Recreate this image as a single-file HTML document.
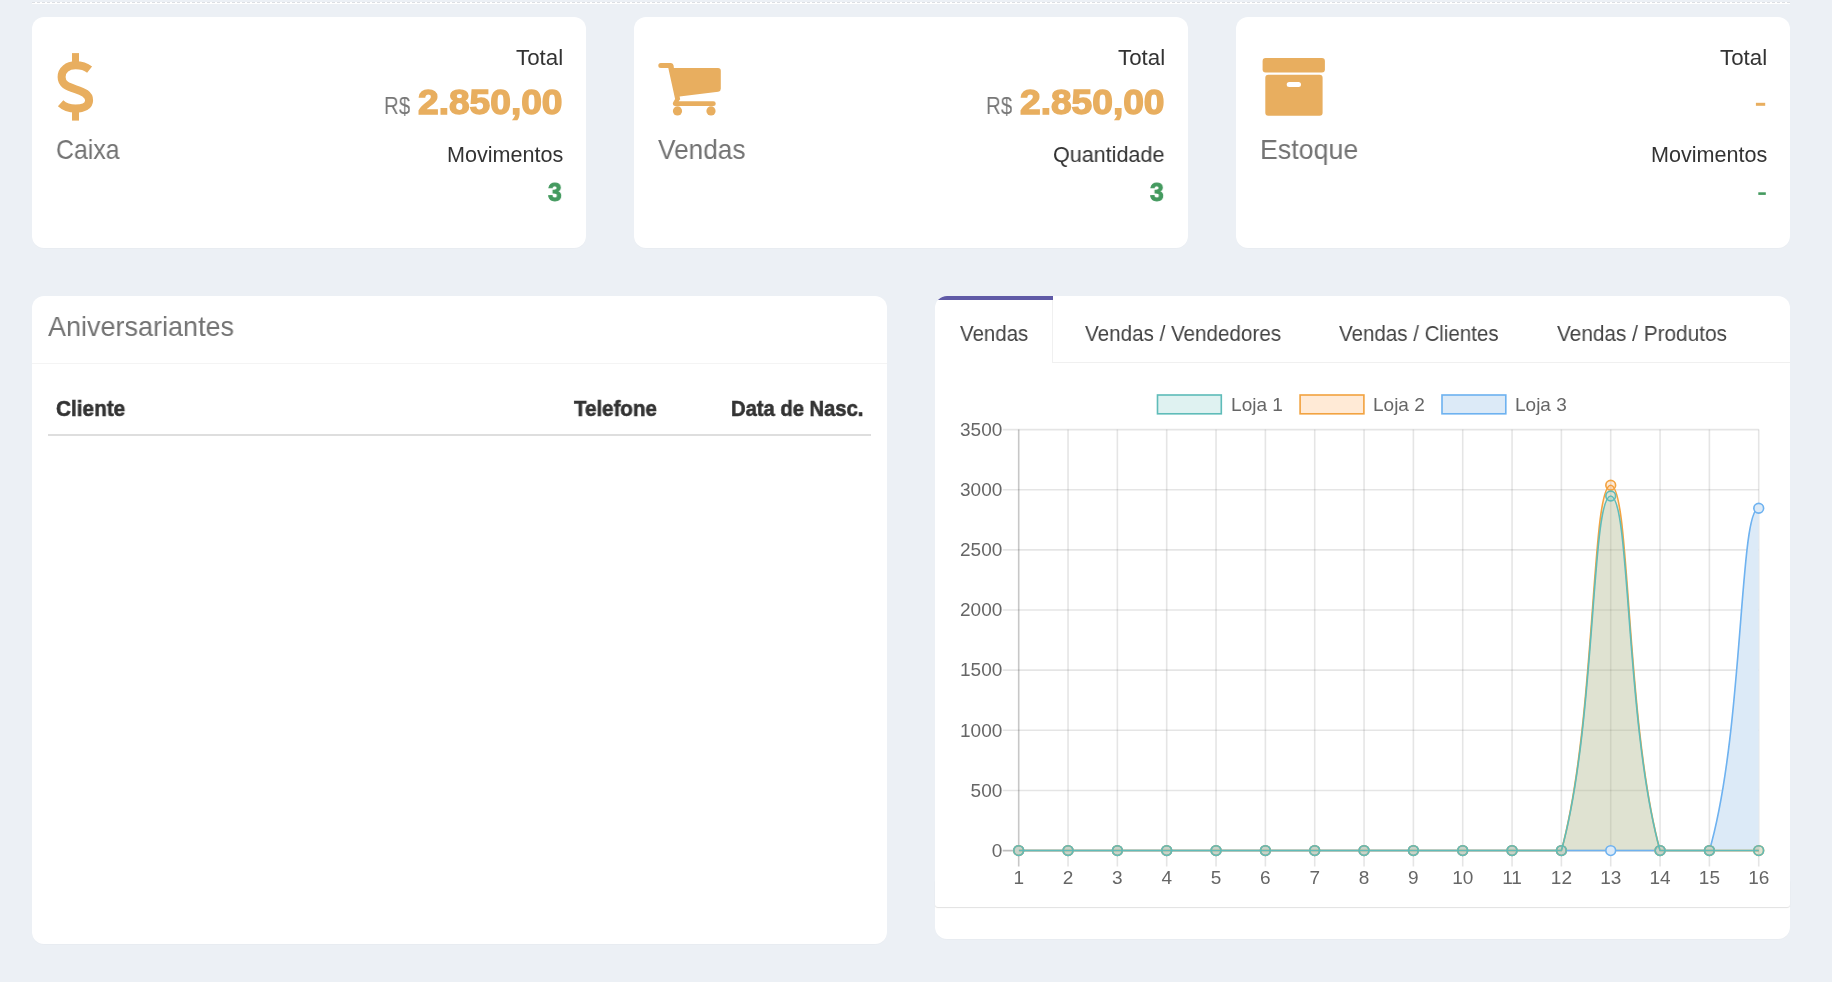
<!DOCTYPE html>
<html lang="pt-BR"><head><meta charset="utf-8"><title>Dashboard</title>
<style>
html,body{margin:0;padding:0}
body{width:1832px;height:982px;overflow:hidden;position:relative;background:#ecf0f5;font-family:"Liberation Sans",sans-serif}
.t{position:absolute;white-space:nowrap;transform-origin:0 0;will-change:transform}
.box{position:absolute;background:#fff;border-radius:12px;box-shadow:0 1px 0 rgba(0,0,0,0.015)}
.ln{position:absolute}
svg{position:absolute;left:0;top:0;will-change:transform}
.tk{font-family:"Liberation Sans",sans-serif;font-size:19px;fill:#666}
</style></head><body>
<div class="ln" style="left:32px;top:2px;width:1758px;height:1px;background:repeating-linear-gradient(90deg,#dcdfe4 0 3px,#fff 3px 5px)"></div>
<div class="ln" style="left:32px;top:3px;width:1758px;height:1px;background:#fff"></div>
<div class="box" style="left:32px;top:17px;width:554px;height:231px"></div>
<div class="box" style="left:634px;top:17px;width:554px;height:231px"></div>
<div class="box" style="left:1236px;top:17px;width:554px;height:231px"></div>
<div class="box" style="left:32px;top:296px;width:855px;height:648px"></div>
<div class="ln" style="left:32px;top:363px;width:855px;height:1px;background:#f4f4f4"></div>
<div class="ln" style="left:48px;top:434px;width:823px;height:2px;background:#dedede"></div>
<div class="box" style="left:935px;top:296px;width:855px;height:643px"></div>
<div class="ln" style="left:935px;top:296px;width:118px;height:14px;background:linear-gradient(#5f5aa6 0,#5f5aa6 4px,transparent 4px);border-top-left-radius:12px"></div>
<div class="ln" style="left:1052px;top:300px;width:1px;height:62px;background:#f0f0f0"></div>
<div class="ln" style="left:1052px;top:362px;width:738px;height:1px;background:#f0f0f0"></div>
<div class="ln" style="left:935px;top:880px;width:855px;height:27px;background:#fff;border-radius:0 0 3px 3px;box-shadow:0 1px 1px rgba(0,0,0,0.12)"></div>
<div class="t" style="left:515.65px;top:48.00px;font-size:21.52px;line-height:21.52px;font-weight:400;color:#333333;transform:scaleX(1.0369)">Total</div><div class="t" style="left:383.96px;top:94.00px;font-size:24.78px;line-height:24.78px;font-weight:400;color:#777777;transform:scaleX(0.8258)">R$</div><div class="t" style="left:417.59px;top:84.00px;font-size:35.07px;line-height:35.07px;font-weight:700;color:#e8ae5f;transform:scaleX(1.0588);-webkit-text-stroke:1.4px #e8ae5f">2.850,00</div><div class="t" style="left:547.51px;top:179.00px;font-size:26.29px;line-height:26.29px;font-weight:700;color:#449a5f;transform:scaleX(0.9359);-webkit-text-stroke:1.0px #449a5f">3</div><div class="t" style="left:446.68px;top:144.00px;font-size:21.59px;line-height:21.59px;font-weight:400;color:#333333;transform:scaleX(0.9974)">Movimentos</div><div class="t" style="left:1117.65px;top:48.00px;font-size:21.52px;line-height:21.52px;font-weight:400;color:#333333;transform:scaleX(1.0369)">Total</div><div class="t" style="left:985.96px;top:94.00px;font-size:24.78px;line-height:24.78px;font-weight:400;color:#777777;transform:scaleX(0.8258)">R$</div><div class="t" style="left:1019.59px;top:84.00px;font-size:35.07px;line-height:35.07px;font-weight:700;color:#e8ae5f;transform:scaleX(1.0588);-webkit-text-stroke:1.4px #e8ae5f">2.850,00</div><div class="t" style="left:1149.51px;top:179.00px;font-size:26.29px;line-height:26.29px;font-weight:700;color:#449a5f;transform:scaleX(0.9359);-webkit-text-stroke:1.0px #449a5f">3</div><div class="t" style="left:1052.92px;top:144.00px;font-size:21.88px;line-height:21.88px;font-weight:400;color:#333333;transform:scaleX(0.9850)">Quantidade</div><div class="t" style="left:1719.65px;top:48.00px;font-size:21.52px;line-height:21.52px;font-weight:400;color:#333333;transform:scaleX(1.0369)">Total</div><div class="t" style="left:1650.68px;top:144.00px;font-size:21.59px;line-height:21.59px;font-weight:400;color:#333333;transform:scaleX(0.9974)">Movimentos</div><div class="t" style="left:55.65px;top:136.00px;font-size:28.04px;line-height:28.04px;font-weight:400;color:#737373;transform:scaleX(0.8879)">Caixa</div><div class="t" style="left:657.74px;top:136.00px;font-size:28.12px;line-height:28.12px;font-weight:400;color:#737373;transform:scaleX(0.9330)">Vendas</div><div class="t" style="left:1260.26px;top:136.00px;font-size:27.83px;line-height:27.83px;font-weight:400;color:#737373;transform:scaleX(0.9614)">Estoque</div><div class="t" style="left:48.00px;top:312.00px;font-size:28.41px;line-height:28.41px;font-weight:400;color:#737373;transform:scaleX(0.9504)">Aniversariantes</div><div class="t" style="left:56.17px;top:398.00px;font-size:22.17px;line-height:22.17px;font-weight:700;color:#333333;transform:scaleX(0.9365);-webkit-text-stroke:0.6px #333333">Cliente</div><div class="t" style="left:574.09px;top:398.00px;font-size:21.74px;line-height:21.74px;font-weight:700;color:#333333;transform:scaleX(0.9431);-webkit-text-stroke:0.6px #333333">Telefone</div><div class="t" style="left:730.89px;top:398.00px;font-size:21.74px;line-height:21.74px;font-weight:700;color:#333333;transform:scaleX(0.9286);-webkit-text-stroke:0.6px #333333">Data de Nasc.</div><div class="t" style="left:960.05px;top:323.00px;font-size:22.32px;line-height:22.32px;font-weight:400;color:#444444;transform:scaleX(0.9159)">Vendas</div><div class="t" style="left:1085.49px;top:323.00px;font-size:22.46px;line-height:22.46px;font-weight:400;color:#444444;transform:scaleX(0.9186)">Vendas / Vendedores</div><div class="t" style="left:1339.19px;top:323.00px;font-size:22.46px;line-height:22.46px;font-weight:400;color:#444444;transform:scaleX(0.9133)">Vendas / Clientes</div><div class="t" style="left:1556.79px;top:323.00px;font-size:22.17px;line-height:22.17px;font-weight:400;color:#444444;transform:scaleX(0.9386)">Vendas / Produtos</div>
<svg width="1832" height="982" viewBox="0 0 1832 982">

<path d="M89.6 69.6 C85.8 66.6 80.8 65.3 75.5 65.3 C67.5 65.3 61.6 70 61.6 77 C61.6 84 67 86.5 75.5 89.2 C84 92 89.1 94.5 89.1 100.2 C89.1 106 83.5 108.6 75.5 108.6 C69.5 108.6 64.5 106.8 60.6 103.2" fill="none" stroke="#e8ae5f" stroke-width="8"/>
<rect x="72" y="53.1" width="7" height="10" fill="#e8ae5f"/>
<rect x="72" y="110.6" width="7" height="10" fill="#e8ae5f"/>
<path d="M660.8 63 L671 63 Q673.2 63 673.6 65.5 L673.9 68 L718 68 Q720.8 68 720.8 70.8 L720.8 88.8 Q720.8 91.4 718.2 91.8 L679.6 96.6 L680.2 99.2 L678.6 101.3 L713.4 101.3 A2.35 2.35 0 0 1 713.4 106 L675.2 106 A2.4 2.4 0 0 1 673.2 102.3 L675.1 99.1 L668.3 68 L660.8 68 A2.5 2.5 0 0 1 660.8 63 Z" fill="#e8ae5f"/>
<circle cx="677.5" cy="110.9" r="4.6" fill="#e8ae5f"/>
<circle cx="711" cy="110.9" r="4.6" fill="#e8ae5f"/>
<rect x="1262.6" y="58" width="62.3" height="14.5" rx="3" fill="#e8ae5f"/>
<path d="M1268.3 74.8 H1319.6 Q1322.6 74.8 1322.6 77.8 V112.7 Q1322.6 115.7 1319.6 115.7 H1268.3 Q1265.3 115.7 1265.3 112.7 V77.8 Q1265.3 74.8 1268.3 74.8 Z M1289.2 82 H1298.5 A2.5 2.5 0 0 1 1298.5 87 H1289.2 A2.5 2.5 0 0 1 1289.2 82 Z" fill="#e8ae5f" fill-rule="evenodd"/>
<rect x="1755.9" y="102.8" width="9.3" height="3" fill="#e8ae5f"/>
<rect x="1758.3" y="192.3" width="7.5" height="2.6" fill="#449a5f"/>

<line x1="1002.70" y1="850.60" x2="1758.72" y2="850.60" stroke="rgba(0,0,0,0.25)" stroke-width="1.625"/>
<line x1="1002.70" y1="790.46" x2="1758.72" y2="790.46" stroke="rgba(0,0,0,0.1)" stroke-width="1.625"/>
<line x1="1002.70" y1="730.31" x2="1758.72" y2="730.31" stroke="rgba(0,0,0,0.1)" stroke-width="1.625"/>
<line x1="1002.70" y1="670.17" x2="1758.72" y2="670.17" stroke="rgba(0,0,0,0.1)" stroke-width="1.625"/>
<line x1="1002.70" y1="610.03" x2="1758.72" y2="610.03" stroke="rgba(0,0,0,0.1)" stroke-width="1.625"/>
<line x1="1002.70" y1="549.89" x2="1758.72" y2="549.89" stroke="rgba(0,0,0,0.1)" stroke-width="1.625"/>
<line x1="1002.70" y1="489.74" x2="1758.72" y2="489.74" stroke="rgba(0,0,0,0.1)" stroke-width="1.625"/>
<line x1="1002.70" y1="429.60" x2="1758.72" y2="429.60" stroke="rgba(0,0,0,0.1)" stroke-width="1.625"/>
<line x1="1018.70" y1="429.60" x2="1018.70" y2="866.60" stroke="rgba(0,0,0,0.22)" stroke-width="1.625"/>
<line x1="1068.04" y1="429.60" x2="1068.04" y2="866.60" stroke="rgba(0,0,0,0.1)" stroke-width="1.625"/>
<line x1="1117.37" y1="429.60" x2="1117.37" y2="866.60" stroke="rgba(0,0,0,0.1)" stroke-width="1.625"/>
<line x1="1166.70" y1="429.60" x2="1166.70" y2="866.60" stroke="rgba(0,0,0,0.1)" stroke-width="1.625"/>
<line x1="1216.04" y1="429.60" x2="1216.04" y2="866.60" stroke="rgba(0,0,0,0.1)" stroke-width="1.625"/>
<line x1="1265.38" y1="429.60" x2="1265.38" y2="866.60" stroke="rgba(0,0,0,0.1)" stroke-width="1.625"/>
<line x1="1314.71" y1="429.60" x2="1314.71" y2="866.60" stroke="rgba(0,0,0,0.1)" stroke-width="1.625"/>
<line x1="1364.05" y1="429.60" x2="1364.05" y2="866.60" stroke="rgba(0,0,0,0.1)" stroke-width="1.625"/>
<line x1="1413.38" y1="429.60" x2="1413.38" y2="866.60" stroke="rgba(0,0,0,0.1)" stroke-width="1.625"/>
<line x1="1462.72" y1="429.60" x2="1462.72" y2="866.60" stroke="rgba(0,0,0,0.1)" stroke-width="1.625"/>
<line x1="1512.05" y1="429.60" x2="1512.05" y2="866.60" stroke="rgba(0,0,0,0.1)" stroke-width="1.625"/>
<line x1="1561.39" y1="429.60" x2="1561.39" y2="866.60" stroke="rgba(0,0,0,0.1)" stroke-width="1.625"/>
<line x1="1610.72" y1="429.60" x2="1610.72" y2="866.60" stroke="rgba(0,0,0,0.1)" stroke-width="1.625"/>
<line x1="1660.06" y1="429.60" x2="1660.06" y2="866.60" stroke="rgba(0,0,0,0.1)" stroke-width="1.625"/>
<line x1="1709.39" y1="429.60" x2="1709.39" y2="866.60" stroke="rgba(0,0,0,0.1)" stroke-width="1.625"/>
<line x1="1758.72" y1="429.60" x2="1758.72" y2="866.60" stroke="rgba(0,0,0,0.1)" stroke-width="1.625"/>
<text x="1002.3" y="856.90" text-anchor="end" class="tk">0</text>
<text x="1002.3" y="796.76" text-anchor="end" class="tk">500</text>
<text x="1002.3" y="736.61" text-anchor="end" class="tk">1000</text>
<text x="1002.3" y="676.47" text-anchor="end" class="tk">1500</text>
<text x="1002.3" y="616.33" text-anchor="end" class="tk">2000</text>
<text x="1002.3" y="556.19" text-anchor="end" class="tk">2500</text>
<text x="1002.3" y="496.04" text-anchor="end" class="tk">3000</text>
<text x="1002.3" y="435.90" text-anchor="end" class="tk">3500</text>
<text x="1018.70" y="884" text-anchor="middle" class="tk">1</text>
<text x="1068.04" y="884" text-anchor="middle" class="tk">2</text>
<text x="1117.37" y="884" text-anchor="middle" class="tk">3</text>
<text x="1166.70" y="884" text-anchor="middle" class="tk">4</text>
<text x="1216.04" y="884" text-anchor="middle" class="tk">5</text>
<text x="1265.38" y="884" text-anchor="middle" class="tk">6</text>
<text x="1314.71" y="884" text-anchor="middle" class="tk">7</text>
<text x="1364.05" y="884" text-anchor="middle" class="tk">8</text>
<text x="1413.38" y="884" text-anchor="middle" class="tk">9</text>
<text x="1462.72" y="884" text-anchor="middle" class="tk">10</text>
<text x="1512.05" y="884" text-anchor="middle" class="tk">11</text>
<text x="1561.39" y="884" text-anchor="middle" class="tk">12</text>
<text x="1610.72" y="884" text-anchor="middle" class="tk">13</text>
<text x="1660.06" y="884" text-anchor="middle" class="tk">14</text>
<text x="1709.39" y="884" text-anchor="middle" class="tk">15</text>
<text x="1758.72" y="884" text-anchor="middle" class="tk">16</text>
<rect x="1157.50" y="395.0" width="63.8" height="18.8" fill="rgba(95,188,185,0.2)" stroke="rgb(95,188,185)" stroke-width="1.625"/>
<text x="1231.10" y="411" class="tk">Loja 1</text>
<rect x="1300.10" y="395.0" width="63.8" height="18.8" fill="rgba(255,150,50,0.2)" stroke="rgb(242,163,65)" stroke-width="1.625"/>
<text x="1373.00" y="411" class="tk">Loja 2</text>
<rect x="1442.00" y="395.0" width="63.8" height="18.8" fill="#dceaf7" stroke="rgb(110,178,240)" stroke-width="1.625"/>
<text x="1515.00" y="411" class="tk">Loja 3</text>
<defs><clipPath id="ca"><rect x="1018.70" y="429.60" width="740.02" height="421.00"/></clipPath><clipPath id="cl"><rect x="1018.70" y="428.79" width="740.02" height="422.62"/></clipPath></defs>
<path d="M1018.70 850.60 C1038.43 850.60 1048.30 850.60 1068.04 850.60 C1087.77 850.60 1097.64 850.60 1117.37 850.60 C1137.10 850.60 1146.97 850.60 1166.70 850.60 C1186.44 850.60 1196.31 850.60 1216.04 850.60 C1235.77 850.60 1245.64 850.60 1265.38 850.60 C1285.11 850.60 1294.98 850.60 1314.71 850.60 C1334.44 850.60 1344.31 850.60 1364.05 850.60 C1383.78 850.60 1393.65 850.60 1413.38 850.60 C1433.11 850.60 1442.98 850.60 1462.72 850.60 C1482.45 850.60 1492.32 850.60 1512.05 850.60 C1531.78 850.60 1541.65 850.60 1561.39 850.60 C1581.12 850.60 1590.99 850.60 1610.72 850.60 C1630.45 850.60 1640.32 850.60 1660.06 850.60 C1679.79 850.60 1704.46 850.60 1709.39 850.60 C1743.93 730.73 1738.99 508.20 1758.72 508.20 C1778.46 508.20 1788.33 713.64 1808.06 850.60 L1808.06 850.60 L1018.70 850.60 Z" fill="#dceaf7" stroke="none" clip-path="url(#ca)"/>
<path d="M1018.70 850.60 C1038.43 850.60 1048.30 850.60 1068.04 850.60 C1087.77 850.60 1097.64 850.60 1117.37 850.60 C1137.10 850.60 1146.97 850.60 1166.70 850.60 C1186.44 850.60 1196.31 850.60 1216.04 850.60 C1235.77 850.60 1245.64 850.60 1265.38 850.60 C1285.11 850.60 1294.98 850.60 1314.71 850.60 C1334.44 850.60 1344.31 850.60 1364.05 850.60 C1383.78 850.60 1393.65 850.60 1413.38 850.60 C1433.11 850.60 1442.98 850.60 1462.72 850.60 C1482.45 850.60 1492.32 850.60 1512.05 850.60 C1531.78 850.60 1556.73 850.60 1561.39 850.60 C1596.20 721.69 1590.99 485.20 1610.72 485.20 C1630.45 485.20 1625.24 721.69 1660.06 850.60 C1664.71 850.60 1689.66 850.60 1709.39 850.60 C1729.12 850.60 1738.99 850.60 1758.72 850.60 C1778.46 850.60 1788.33 850.60 1808.06 850.60 L1808.06 850.60 L1018.70 850.60 Z" fill="rgba(255,150,50,0.2)" stroke="none" clip-path="url(#ca)"/>
<path d="M1018.70 850.60 C1038.43 850.60 1048.30 850.60 1068.04 850.60 C1087.77 850.60 1097.64 850.60 1117.37 850.60 C1137.10 850.60 1146.97 850.60 1166.70 850.60 C1186.44 850.60 1196.31 850.60 1216.04 850.60 C1235.77 850.60 1245.64 850.60 1265.38 850.60 C1285.11 850.60 1294.98 850.60 1314.71 850.60 C1334.44 850.60 1344.31 850.60 1364.05 850.60 C1383.78 850.60 1393.65 850.60 1413.38 850.60 C1433.11 850.60 1442.98 850.60 1462.72 850.60 C1482.45 850.60 1492.32 850.60 1512.05 850.60 C1531.78 850.60 1556.60 850.60 1561.39 850.60 C1596.07 725.94 1590.99 496.00 1610.72 496.00 C1630.45 496.00 1625.37 725.94 1660.06 850.60 C1664.84 850.60 1689.66 850.60 1709.39 850.60 C1729.12 850.60 1738.99 850.60 1758.72 850.60 C1778.46 850.60 1788.33 850.60 1808.06 850.60 L1808.06 850.60 L1018.70 850.60 Z" fill="rgba(95,188,185,0.2)" stroke="none" clip-path="url(#ca)"/>
<path d="M1018.70 850.60 C1038.43 850.60 1048.30 850.60 1068.04 850.60 C1087.77 850.60 1097.64 850.60 1117.37 850.60 C1137.10 850.60 1146.97 850.60 1166.70 850.60 C1186.44 850.60 1196.31 850.60 1216.04 850.60 C1235.77 850.60 1245.64 850.60 1265.38 850.60 C1285.11 850.60 1294.98 850.60 1314.71 850.60 C1334.44 850.60 1344.31 850.60 1364.05 850.60 C1383.78 850.60 1393.65 850.60 1413.38 850.60 C1433.11 850.60 1442.98 850.60 1462.72 850.60 C1482.45 850.60 1492.32 850.60 1512.05 850.60 C1531.78 850.60 1541.65 850.60 1561.39 850.60 C1581.12 850.60 1590.99 850.60 1610.72 850.60 C1630.45 850.60 1640.32 850.60 1660.06 850.60 C1679.79 850.60 1704.46 850.60 1709.39 850.60 C1743.93 730.73 1738.99 508.20 1758.72 508.20 C1778.46 508.20 1788.33 713.64 1808.06 850.60" fill="none" stroke="rgb(110,178,240)" stroke-width="1.625" clip-path="url(#cl)"/>
<circle cx="1018.70" cy="850.60" r="4.875" fill="#dceaf7" stroke="rgb(110,178,240)" stroke-width="1.625"/>
<circle cx="1068.04" cy="850.60" r="4.875" fill="#dceaf7" stroke="rgb(110,178,240)" stroke-width="1.625"/>
<circle cx="1117.37" cy="850.60" r="4.875" fill="#dceaf7" stroke="rgb(110,178,240)" stroke-width="1.625"/>
<circle cx="1166.70" cy="850.60" r="4.875" fill="#dceaf7" stroke="rgb(110,178,240)" stroke-width="1.625"/>
<circle cx="1216.04" cy="850.60" r="4.875" fill="#dceaf7" stroke="rgb(110,178,240)" stroke-width="1.625"/>
<circle cx="1265.38" cy="850.60" r="4.875" fill="#dceaf7" stroke="rgb(110,178,240)" stroke-width="1.625"/>
<circle cx="1314.71" cy="850.60" r="4.875" fill="#dceaf7" stroke="rgb(110,178,240)" stroke-width="1.625"/>
<circle cx="1364.05" cy="850.60" r="4.875" fill="#dceaf7" stroke="rgb(110,178,240)" stroke-width="1.625"/>
<circle cx="1413.38" cy="850.60" r="4.875" fill="#dceaf7" stroke="rgb(110,178,240)" stroke-width="1.625"/>
<circle cx="1462.72" cy="850.60" r="4.875" fill="#dceaf7" stroke="rgb(110,178,240)" stroke-width="1.625"/>
<circle cx="1512.05" cy="850.60" r="4.875" fill="#dceaf7" stroke="rgb(110,178,240)" stroke-width="1.625"/>
<circle cx="1561.39" cy="850.60" r="4.875" fill="#dceaf7" stroke="rgb(110,178,240)" stroke-width="1.625"/>
<circle cx="1610.72" cy="850.60" r="4.875" fill="#dceaf7" stroke="rgb(110,178,240)" stroke-width="1.625"/>
<circle cx="1660.06" cy="850.60" r="4.875" fill="#dceaf7" stroke="rgb(110,178,240)" stroke-width="1.625"/>
<circle cx="1709.39" cy="850.60" r="4.875" fill="#dceaf7" stroke="rgb(110,178,240)" stroke-width="1.625"/>
<circle cx="1758.72" cy="508.20" r="4.875" fill="#dceaf7" stroke="rgb(110,178,240)" stroke-width="1.625"/>
<path d="M1018.70 850.60 C1038.43 850.60 1048.30 850.60 1068.04 850.60 C1087.77 850.60 1097.64 850.60 1117.37 850.60 C1137.10 850.60 1146.97 850.60 1166.70 850.60 C1186.44 850.60 1196.31 850.60 1216.04 850.60 C1235.77 850.60 1245.64 850.60 1265.38 850.60 C1285.11 850.60 1294.98 850.60 1314.71 850.60 C1334.44 850.60 1344.31 850.60 1364.05 850.60 C1383.78 850.60 1393.65 850.60 1413.38 850.60 C1433.11 850.60 1442.98 850.60 1462.72 850.60 C1482.45 850.60 1492.32 850.60 1512.05 850.60 C1531.78 850.60 1556.73 850.60 1561.39 850.60 C1596.20 721.69 1590.99 485.20 1610.72 485.20 C1630.45 485.20 1625.24 721.69 1660.06 850.60 C1664.71 850.60 1689.66 850.60 1709.39 850.60 C1729.12 850.60 1738.99 850.60 1758.72 850.60 C1778.46 850.60 1788.33 850.60 1808.06 850.60" fill="none" stroke="rgb(242,163,65)" stroke-width="1.625" clip-path="url(#cl)"/>
<circle cx="1018.70" cy="850.60" r="4.875" fill="rgba(255,150,50,0.2)" stroke="rgb(242,163,65)" stroke-width="1.625"/>
<circle cx="1068.04" cy="850.60" r="4.875" fill="rgba(255,150,50,0.2)" stroke="rgb(242,163,65)" stroke-width="1.625"/>
<circle cx="1117.37" cy="850.60" r="4.875" fill="rgba(255,150,50,0.2)" stroke="rgb(242,163,65)" stroke-width="1.625"/>
<circle cx="1166.70" cy="850.60" r="4.875" fill="rgba(255,150,50,0.2)" stroke="rgb(242,163,65)" stroke-width="1.625"/>
<circle cx="1216.04" cy="850.60" r="4.875" fill="rgba(255,150,50,0.2)" stroke="rgb(242,163,65)" stroke-width="1.625"/>
<circle cx="1265.38" cy="850.60" r="4.875" fill="rgba(255,150,50,0.2)" stroke="rgb(242,163,65)" stroke-width="1.625"/>
<circle cx="1314.71" cy="850.60" r="4.875" fill="rgba(255,150,50,0.2)" stroke="rgb(242,163,65)" stroke-width="1.625"/>
<circle cx="1364.05" cy="850.60" r="4.875" fill="rgba(255,150,50,0.2)" stroke="rgb(242,163,65)" stroke-width="1.625"/>
<circle cx="1413.38" cy="850.60" r="4.875" fill="rgba(255,150,50,0.2)" stroke="rgb(242,163,65)" stroke-width="1.625"/>
<circle cx="1462.72" cy="850.60" r="4.875" fill="rgba(255,150,50,0.2)" stroke="rgb(242,163,65)" stroke-width="1.625"/>
<circle cx="1512.05" cy="850.60" r="4.875" fill="rgba(255,150,50,0.2)" stroke="rgb(242,163,65)" stroke-width="1.625"/>
<circle cx="1561.39" cy="850.60" r="4.875" fill="rgba(255,150,50,0.2)" stroke="rgb(242,163,65)" stroke-width="1.625"/>
<circle cx="1610.72" cy="485.20" r="4.875" fill="rgba(255,150,50,0.2)" stroke="rgb(242,163,65)" stroke-width="1.625"/>
<circle cx="1660.06" cy="850.60" r="4.875" fill="rgba(255,150,50,0.2)" stroke="rgb(242,163,65)" stroke-width="1.625"/>
<circle cx="1709.39" cy="850.60" r="4.875" fill="rgba(255,150,50,0.2)" stroke="rgb(242,163,65)" stroke-width="1.625"/>
<circle cx="1758.72" cy="850.60" r="4.875" fill="rgba(255,150,50,0.2)" stroke="rgb(242,163,65)" stroke-width="1.625"/>
<path d="M1018.70 850.60 C1038.43 850.60 1048.30 850.60 1068.04 850.60 C1087.77 850.60 1097.64 850.60 1117.37 850.60 C1137.10 850.60 1146.97 850.60 1166.70 850.60 C1186.44 850.60 1196.31 850.60 1216.04 850.60 C1235.77 850.60 1245.64 850.60 1265.38 850.60 C1285.11 850.60 1294.98 850.60 1314.71 850.60 C1334.44 850.60 1344.31 850.60 1364.05 850.60 C1383.78 850.60 1393.65 850.60 1413.38 850.60 C1433.11 850.60 1442.98 850.60 1462.72 850.60 C1482.45 850.60 1492.32 850.60 1512.05 850.60 C1531.78 850.60 1556.60 850.60 1561.39 850.60 C1596.07 725.94 1590.99 496.00 1610.72 496.00 C1630.45 496.00 1625.37 725.94 1660.06 850.60 C1664.84 850.60 1689.66 850.60 1709.39 850.60 C1729.12 850.60 1738.99 850.60 1758.72 850.60 C1778.46 850.60 1788.33 850.60 1808.06 850.60" fill="none" stroke="rgb(95,188,185)" stroke-width="1.625" clip-path="url(#cl)"/>
<circle cx="1018.70" cy="850.60" r="4.875" fill="rgba(95,188,185,0.2)" stroke="rgb(95,188,185)" stroke-width="1.625"/>
<circle cx="1068.04" cy="850.60" r="4.875" fill="rgba(95,188,185,0.2)" stroke="rgb(95,188,185)" stroke-width="1.625"/>
<circle cx="1117.37" cy="850.60" r="4.875" fill="rgba(95,188,185,0.2)" stroke="rgb(95,188,185)" stroke-width="1.625"/>
<circle cx="1166.70" cy="850.60" r="4.875" fill="rgba(95,188,185,0.2)" stroke="rgb(95,188,185)" stroke-width="1.625"/>
<circle cx="1216.04" cy="850.60" r="4.875" fill="rgba(95,188,185,0.2)" stroke="rgb(95,188,185)" stroke-width="1.625"/>
<circle cx="1265.38" cy="850.60" r="4.875" fill="rgba(95,188,185,0.2)" stroke="rgb(95,188,185)" stroke-width="1.625"/>
<circle cx="1314.71" cy="850.60" r="4.875" fill="rgba(95,188,185,0.2)" stroke="rgb(95,188,185)" stroke-width="1.625"/>
<circle cx="1364.05" cy="850.60" r="4.875" fill="rgba(95,188,185,0.2)" stroke="rgb(95,188,185)" stroke-width="1.625"/>
<circle cx="1413.38" cy="850.60" r="4.875" fill="rgba(95,188,185,0.2)" stroke="rgb(95,188,185)" stroke-width="1.625"/>
<circle cx="1462.72" cy="850.60" r="4.875" fill="rgba(95,188,185,0.2)" stroke="rgb(95,188,185)" stroke-width="1.625"/>
<circle cx="1512.05" cy="850.60" r="4.875" fill="rgba(95,188,185,0.2)" stroke="rgb(95,188,185)" stroke-width="1.625"/>
<circle cx="1561.39" cy="850.60" r="4.875" fill="rgba(95,188,185,0.2)" stroke="rgb(95,188,185)" stroke-width="1.625"/>
<circle cx="1610.72" cy="496.00" r="4.875" fill="rgba(95,188,185,0.2)" stroke="rgb(95,188,185)" stroke-width="1.625"/>
<circle cx="1660.06" cy="850.60" r="4.875" fill="rgba(95,188,185,0.2)" stroke="rgb(95,188,185)" stroke-width="1.625"/>
<circle cx="1709.39" cy="850.60" r="4.875" fill="rgba(95,188,185,0.2)" stroke="rgb(95,188,185)" stroke-width="1.625"/>
<circle cx="1758.72" cy="850.60" r="4.875" fill="rgba(95,188,185,0.2)" stroke="rgb(95,188,185)" stroke-width="1.625"/>
</svg>
</body></html>
